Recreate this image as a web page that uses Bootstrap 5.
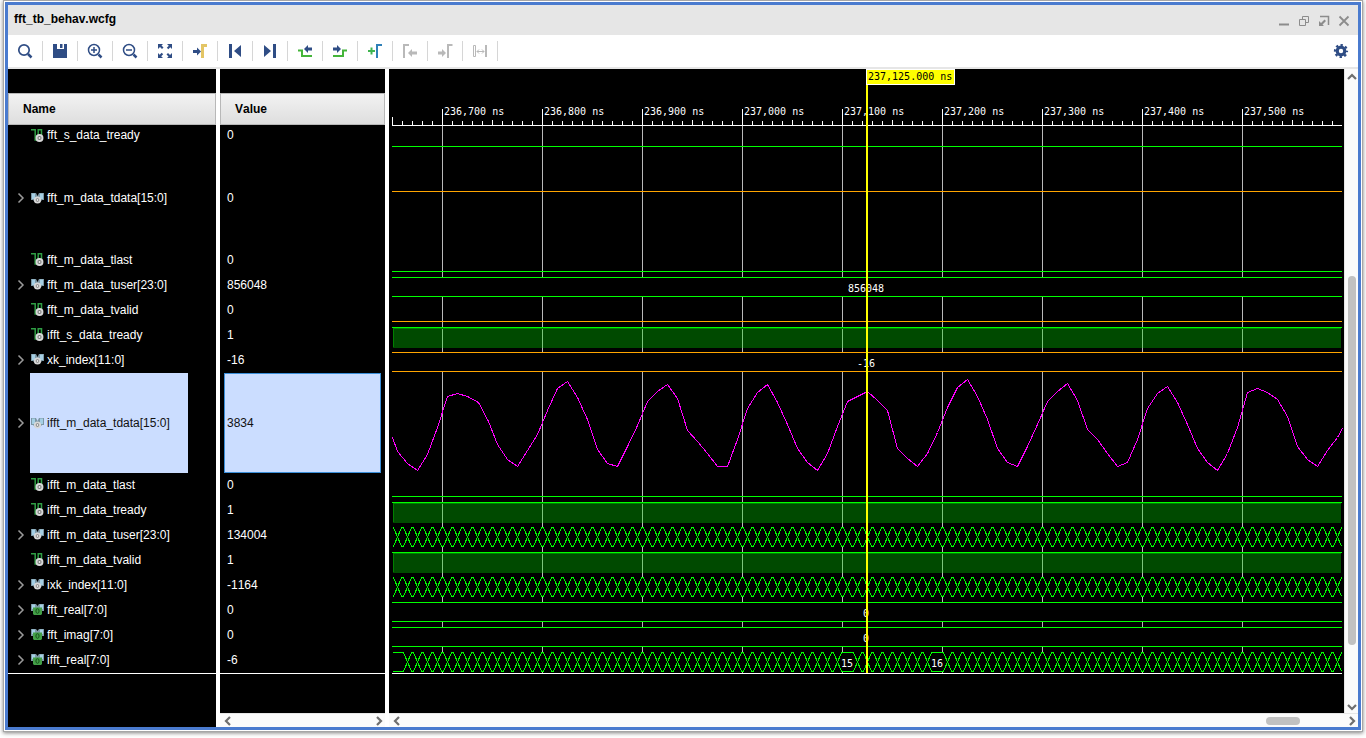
<!DOCTYPE html>
<html lang="en">
<head>
<meta charset="utf-8">
<meta name="viewport" content="width=device-width, initial-scale=1">
<title>fft_tb_behav.wcfg</title>
<link rel="stylesheet" href="https://cdn.jsdelivr.net/npm/bootstrap@5.3.0/dist/css/bootstrap.min.css">
<style>
  :root { --ink: #2f4d85; --frame: #4a7bcf; --chrome: #e6e6e6; --dim: #b9b9b9; }
  body { font: 12px/16px "Liberation Sans", Arial, sans-serif; font-kerning: none; color: #000; background: #fff; }
  .page { padding: 0 3px 6px; }
  .frame { border: 1px solid #a6a6a6; padding: 1px; background: #fff; box-shadow: 0 1px 4px rgba(0,0,0,.5); }
  .frame-inner { border: 3px solid var(--frame); }
  button { border: 0; background: none; padding: 0; line-height: 1; color: inherit; }
  svg { display: block; }
  .titlebar { height: 30px; background: var(--chrome); padding: 0 4px 2px 6px; }
  .titlebar h1 { font-size: 12px; line-height: 16px; }
  .titlebar button { width: 20px; height: 12px; color: #8c8c8c; }
  .toolbar { height: 34px; border-bottom: 2px solid var(--chrome); padding-right: 9px; color: var(--ink); }
  .tool { width: 35px; height: 20px; border-right: 1px solid #d6d6d6; }
  .tool:disabled { color: var(--dim); }
  .signals { width: 381px; border-right: 4px solid #fff; color: #fff;
    background: linear-gradient(to right, #000 208px, #fff 208px, #fff 212px, #000 212px); }
  .signals table { width: 377px; table-layout: fixed; border-collapse: separate; border-spacing: 0; border-bottom: 1px solid #fff; margin-top: 24px; }
  .signals th { height: 32px; padding: 0 14px; color: #000; background: linear-gradient(#f2f2f2, #dedede); border: 1px solid #b8b8b8; }
  .signals .gap { width: 4px; padding: 0; border: 0; background: #fff; }
  .signals td { height: 25px; padding: 0; }
  .signals tr.tall td { height: 100px; }
  .signals tr.first td { height: 23px; padding-bottom: 3px; }
  .sig, .val { height: 25px; padding-bottom: 2px; }
  .first .sig, .first .val { height: 20px; padding-bottom: 0; }
  .tall .sig, .tall .val { height: 100px; padding-bottom: 0; }
  .twist { width: 22px; height: 16px; padding-left: 7px; color: #9a9a9a; }
  .sig-label { height: 100%; padding: 0 15px 0 1px; gap: 3px; }
  .val { padding-left: 3px; margin: 0 4px; }
  .tall .val { border: 1px solid transparent; padding-left: 2px; }
  .chosen .sig-label { min-width: 158px; }
  .chosen .sig-label, .chosen .val { background: #cbddff; color: #111; }
  .chosen .val { border-color: #3b8fd9; }
  .hbar { height: 14px; background: #fbfbfb; border-top: 1px solid var(--chrome); color: #6e6e6e; padding-left: 2px; }
  .vbar { width: 14px; background: #fbfbfb; border-left: 1px solid var(--chrome); color: #6e6e6e; padding-top: 2px; }
  .thumb { background: #c1c1c1; border-radius: 4px; }
  .vbar .thumb { width: 8px; height: 369px; margin: auto 0 56px; }
  .hbar .thumb { width: 34px; height: 8px; margin: 0 46px 0 auto; }
  .name-foot { width: 212px; }
  .wave text { font: 10px "DejaVu Sans Mono", monospace; fill: #fff; }
  .wave { background: #000; }
</style>
</head>
<body>
<svg width="0" height="0" class="position-absolute" aria-hidden="true">
  <defs>
    <symbol id="scalar" viewBox="0 0 13 13">
      <path d="M0 .8h4.200v10.200h3V.8h3.300V6" fill="none" stroke="#2f9e44" stroke-width="1.500"/>
      <circle cx="8.500" cy="9" r="3" fill="#777" stroke="#d8d8d8" stroke-width="1.900"/><circle cx="8.500" cy="9" r="1" fill="#eee"/>
    </symbol>
    <symbol id="bus" viewBox="0 0 13 13">
      <path d="M0 1h5l1.500 3L8 1h5v7h-2l-2 2H4L2 8H0z" fill="#7d98a6"/><path d="M1 1.500h3V7H1zM9 1.500h3V7H9z" fill="#a5cfe4"/>
      <circle cx="6.500" cy="8" r="2.700" fill="#777" stroke="#d8d8d8" stroke-width="1.800"/><circle cx="6.500" cy="8" r="1" fill="#eee"/>
    </symbol>
    <symbol id="reg" viewBox="0 0 13 13">
      <path d="M0 1h5l1.500 2L8 1h5v7H0z" fill="#7d98a6"/><path d="M1 1.500h3V6H1zM9 1.500h3V6H9z" fill="#a5cfe4"/>
      <path d="M2 4.500h9V11l-1 1H3l-1-1z" fill="#43a047"/><ellipse cx="6.500" cy="8" rx="1.600" ry="2.300" fill="none" stroke="#174f1b"/>
    </symbol>
    <symbol id="right" viewBox="0 0 12 12"><path d="M3.500 1.500L8 6l-4.500 4.500" fill="none" stroke="currentColor" stroke-width="1.500"/></symbol>
    <symbol id="chev" viewBox="0 0 12 12"><path d="M8 2L4 6l4 4" fill="none" stroke="currentColor" stroke-width="2.200"/></symbol>
  </defs>
</svg>

<div class="page vh-100">
 <div class="frame h-100">
  <div class="frame-inner h-100 d-flex flex-column">

   <header class="titlebar d-flex align-items-center flex-shrink-0">
     <h1 class="fw-bold m-0 me-auto">fft_tb_behav.wcfg</h1>
     <div class="d-flex mt-1">
     <button type="button" aria-label="Minimize"><svg class="m-auto" width="12" height="12"><path d="M1 9.500h10" stroke="currentColor" stroke-width="2"/></svg></button>
     <button type="button" aria-label="Restore"><svg class="m-auto" width="12" height="12" fill="none" stroke="currentColor"><path d="M1.500 4.500h6v6h-6zM4.500 4.500v-3h6v6h-3"/></svg></button>
     <button type="button" aria-label="Float"><svg class="m-auto" width="12" height="12"><path d="M2 1.500h8.500V10" fill="none" stroke="currentColor" stroke-width="1.500"/><path d="M1 6v5h5L4.500 9.500l3.500-3.500-1.500-1.500L3 8z" fill="currentColor"/></svg></button>
     <button type="button" aria-label="Close"><svg class="m-auto" width="12" height="12"><path d="M1.500 1.500l9 9M10.500 1.500l-9 9" stroke="currentColor" stroke-width="1.800"/></svg></button>
     </div>
   </header>

   <div class="toolbar d-flex align-items-center flex-shrink-0" role="toolbar" aria-label="Waveform tools">
     <button class="tool" type="button" aria-label="Find"><svg class="m-auto" width="16" height="16" fill="none" stroke="currentColor"><circle cx="7" cy="7" r="5.200" stroke-width="1.700"/><path d="M11 11l3.500 3.500" stroke-width="2.500"/></svg></button>
     <button class="tool" type="button" aria-label="Save"><svg class="m-auto" width="16" height="16" fill="currentColor"><path d="M1 1h4v5h7V1h3v14H1z"/><path d="M8 1h2.500v4H8z"/></svg></button>
     <button class="tool" type="button" aria-label="Zoom in"><svg class="m-auto" width="16" height="16" fill="none" stroke="currentColor"><circle cx="7" cy="7" r="5.500" stroke-width="1.500"/><path d="M11.500 11.500l3 3" stroke-width="2.500"/><path d="M4 7h6M7 4v6" stroke-width="1.500"/></svg></button>
     <button class="tool" type="button" aria-label="Zoom out"><svg class="m-auto" width="16" height="16" fill="none" stroke="currentColor"><circle cx="7" cy="7" r="5.500" stroke-width="1.500"/><path d="M11.500 11.500l3 3" stroke-width="2.500"/><path d="M4 7h6" stroke-width="1.500"/></svg></button>
     <button class="tool" type="button" aria-label="Zoom fit"><svg class="m-auto" width="16" height="16" fill="currentColor"><path d="M1 1h5L4.500 2.500l2 2-1.500 1.500-2-2L1 6zM15 1v5l-1.700-1.700-2 2-1.500-1.500 2-2L10 1zM1 15v-5l1.700 1.700 2-2 1.500 1.500-2 2L6 15zM15 15h-5l1.500-1.500-2-2 1.500-1.500 2 2L15 10z"/></svg></button>
     <button class="tool" type="button" aria-label="Go to cursor"><svg class="m-auto" width="16" height="16"><path d="M9 8.500l-4-4V7H1v3h4v2.500z" fill="currentColor"/><path d="M10.500 15V2.500H15" fill="none" stroke="#e3c565" stroke-width="3"/></svg></button>
     <button class="tool" type="button" aria-label="Go to start"><svg class="m-auto" width="16" height="16" fill="currentColor"><path d="M2 1h3v14H2zM14 2v12L7 8z"/></svg></button>
     <button class="tool" type="button" aria-label="Go to end"><svg class="m-auto" width="16" height="16" fill="currentColor"><path d="M11 1h3v14h-3zM2 2v12l7-6z"/></svg></button>
     <button class="tool" type="button" aria-label="Previous transition"><svg class="m-auto" width="16" height="16"><path d="M1 7.500h4v5.500H15" fill="none" stroke="#45b53a" stroke-width="2"/><path d="M7 6l4-4v2.500h4v3h-4V10z" fill="currentColor"/></svg></button>
     <button class="tool" type="button" aria-label="Next transition"><svg class="m-auto" width="16" height="16"><path d="M1 13h10V7.500h4" fill="none" stroke="#45b53a" stroke-width="2"/><path d="M9 6L5 2v2.500H1v3h4V10z" fill="currentColor"/></svg></button>
     <button class="tool" type="button" aria-label="Add marker"><svg class="m-auto" width="16" height="16" fill="none" stroke-width="2"><path d="M1 8h7M4.500 4.500v7" stroke="#3fb54f"/><path d="M10 15V2h5" stroke="#2f80b8"/></svg></button>
     <button class="tool" type="button" aria-label="Previous marker" disabled><svg class="m-auto" width="16" height="16"><path d="M2 15V2h5" fill="none" stroke="currentColor" stroke-width="2"/><path d="M6 10l4-4v2.500h5v3h-5V14z" fill="currentColor"/></svg></button>
     <button class="tool" type="button" aria-label="Next marker" disabled><svg class="m-auto" width="16" height="16"><path d="M11 15V2h4.500" fill="none" stroke="currentColor" stroke-width="2"/><path d="M9 10L5 6v2.500H1v3h4V14z" fill="currentColor"/></svg></button>
     <button class="tool" type="button" aria-label="Swap cursors" disabled><svg class="m-auto" width="16" height="16" fill="none" stroke="currentColor"><path d="M1.500 2.500h2v11h-2zM5 8.500h7M7 6.500l-2 2 2 2M10 6.500l2 2-2 2"/><path d="M14 2v12" stroke-width="2"/></svg></button>
     <button class="ms-auto" type="button" aria-label="Settings"><svg width="16" height="16" fill="none" stroke="currentColor"><circle cx="8" cy="8" r="3.800" stroke-width="3.200"/><circle cx="8" cy="8" r="6" stroke-width="2.200" stroke-dasharray="2.356 2.356" stroke-dashoffset="1.178"/></svg></button>
   </div>

   <main class="d-flex flex-fill overflow-hidden">
     <section class="signals d-flex flex-column flex-shrink-0">
       <table>
         <colgroup><col style="width:208px"><col style="width:4px"><col></colgroup>
         <thead><tr><th scope="col">Name</th><th class="gap" aria-hidden="true"></th><th scope="col">Value</th></tr></thead>
         <tbody id="rows"></tbody>
       </table>
       <div class="d-flex mt-auto">
         <div class="name-foot"></div>
         <div class="hbar flex-fill d-flex align-items-center justify-content-between">
           <button type="button" aria-label="Scroll values left"><svg width="12" height="12"><use href="#chev"/></svg></button>
           <button type="button" aria-label="Scroll values right"><svg width="12" height="12" transform="rotate(180)"><use href="#chev"/></svg></button>
         </div>
       </div>
     </section>

     <section class="d-flex flex-column flex-fill overflow-hidden">
       <div class="d-flex flex-fill overflow-hidden">
         <div class="wave flex-fill overflow-hidden" id="wave"></div>
         <div class="vbar d-flex flex-column align-items-center flex-shrink-0">
           <button type="button" aria-label="Scroll up"><svg width="12" height="12" transform="rotate(90)"><use href="#chev"/></svg></button>
           <div class="thumb"></div>
           <button type="button" aria-label="Scroll down"><svg width="12" height="12" transform="rotate(270)"><use href="#chev"/></svg></button>
         </div>
       </div>
       <div class="hbar d-flex align-items-center flex-shrink-0">
         <button type="button" aria-label="Scroll left"><svg width="12" height="12"><use href="#chev"/></svg></button>
         <div class="thumb"></div>
         <button type="button" aria-label="Scroll right"><svg width="12" height="12" transform="rotate(180)"><use href="#chev"/></svg></button>
       </div>
     </section>
   </main>
  </div>
 </div>
</div>

<script>
// [name, value, icon, row class]
const signals = [
  ["fft_s_data_tready", "0", "scalar", "first"],
  ["fft_m_data_tdata[15:0]", "0", "bus", "tall"],
  ["fft_m_data_tlast", "0", "scalar", ""],
  ["fft_m_data_tuser[23:0]", "856048", "bus", ""],
  ["fft_m_data_tvalid", "0", "scalar", ""],
  ["ifft_s_data_tready", "1", "scalar", ""],
  ["xk_index[11:0]", "-16", "bus", ""],
  ["ifft_m_data_tdata[15:0]", "3834", "bus", "tall chosen"],
  ["ifft_m_data_tlast", "0", "scalar", ""],
  ["ifft_m_data_tready", "1", "scalar", ""],
  ["ifft_m_data_tuser[23:0]", "134004", "bus", ""],
  ["ifft_m_data_tvalid", "1", "scalar", ""],
  ["ixk_index[11:0]", "-1164", "bus", ""],
  ["fft_real[7:0]", "0", "reg", ""],
  ["fft_imag[7:0]", "0", "reg", ""],
  ["ifft_real[7:0]", "-6", "reg", ""]
];
document.getElementById("rows").innerHTML = signals.map(([name, value, icon, cls]) => {
  const twist = icon === "scalar" ? '<span class="twist"></span>'
    : `<button class="twist" type="button" aria-label="Expand ${name}"><svg width="12" height="12"><use href="#right"/></svg></button>`;
  return `<tr class="${cls}"><td><div class="sig d-flex align-items-center">${twist}<span class="sig-label d-flex align-items-center"><svg width="13" height="13"><use href="#${icon}"/></svg>${name}</span></div></td><td class="gap"></td><td><div class="val d-flex align-items-center">${value}</div></td></tr>`;
}).join("");

// Samples of ifft_m_data_tdata as x, y inside the wave area
const analog = [[3,368],[8,382],[18,394],[28,401],[38,385],[48,358],[58,327],[68,324],[78,327],[89,333],[99,352],[108,375],[118,390],[128,397],[138,381],[148,365],[158,341],[168,319],[178,312],[188,328],[198,350],[208,380],[218,394],[228,397],[238,377],[248,356],[258,332],[268,322],[278,315],[288,329],[298,361],[308,372],[318,384],[328,397],[338,397],[348,370],[358,339],[368,323],[378,315],[388,333],[398,355],[408,379],[418,393],[428,401],[438,384],[448,357],[458,332],[468,327],[478,322],[488,331],[498,341],[508,379],[518,389],[528,397],[538,384],[548,363],[558,338],[568,318],[578,310],[588,327],[598,350],[608,379],[618,393],[628,397],[638,377],[648,355],[658,332],[668,322],[678,314],[688,331],[698,360],[708,370],[718,384],[728,397],[738,393],[748,370],[758,339],[768,324],[778,317],[788,333],[798,355],[808,379],[818,393],[828,401],[838,384],[848,358],[858,323],[868,319],[878,323],[888,330],[898,347],[908,377],[918,390],[928,397],[938,381],[948,368],[953,359]];

function draw() {
  const host = document.getElementById("wave");
  const w = host.clientWidth, x0 = 3, x1 = w - 2, G = "#0f0", O = "#ffa500";
  let s = "";
  const box = (x, y, bw, bh, c) => s += `<rect x="${x}" y="${y}" width="${bw}" height="${bh}" fill="${c}"/>`;
  const row = (y, c) => box(x0, y, x1 - x0, 1, c);
  const label = (x, y, t, extra = "") => s += `<text x="${x}" y="${y}" ${extra}>${t}</text>`;
  row(56, "#fff");
  for (let x = x0, i = 0; x < x1; x += 10, i++) {
    const k = (i + 5) % 10;
    if (k === 0) {
      box(x, 40, 1, 16, "#fff"); box(x, 57, 1, 548, "#b9b9b9");
      label(x + 2, 46, `${(236600 + (i + 5) * 10).toLocaleString("en-US")} ns`);
    } else {
      const top = i === 0 ? 48 : k === 5 ? 51 : 52;
      box(x, top, 1, 56 - top, "#fff");
    }
  }
  // single-bit rows
  row(77, G); row(122, O); row(202, G); row(252, O); row(427, G);
  [258, 433, 483].forEach(y => {
    box(x0 + 1, y + 1, x1 - x0 - 2, 20, "rgba(0,225,0,.33)");
    box(x0 + 1, y + 1, x1 - x0 - 2, 1, "#008000"); box(x0 + 1, y + 1, 1, 19, "#008000"); row(y, G);
  });
  // buses holding one value
  [[208, G, "856048"], [283, O, "-16"], [533, G, "0"], [558, G, "0"]].forEach(([y, c, t]) => {
    box(x0, y, x1 - x0, 20, "#000"); row(y, c); row(y + 19, c); label(477, y + 15, t, 'text-anchor="middle"');
  });
  // buses changing on every clock
  [[458, []], [508, []], [583, [8, 458, 548]]].forEach(([y, held]) => {
    box(x0, y, x1 - x0, 20, "#000");
    let a = `M${x0} ${y}`, b = `M${x0} ${y + 19}`, up = true;
    for (let c = 8; c - 5 < x1; c += 10) {
      if (held.includes(c)) continue;
      const p = up ? [y, y + 19] : [y + 19, y];
      a += `L${c - 4} ${p[0]}L${c + 4} ${p[1]}`; b += `L${c - 4} ${p[1]}L${c + 4} ${p[0]}`; up = !up;
    }
    s += `<svg width="${x1}" height="605"><path transform="translate(.5 .5)" d="${a}${b}" fill="none" stroke="${G}" shape-rendering="crispEdges"/></svg>`;
  });
  label(458, 598, "15", 'text-anchor="middle"'); label(548, 598, "16", 'text-anchor="middle"');
  s += `<polyline points="${analog.join(" ")}" transform="translate(.5 .5)" fill="none" stroke="#f0f" shape-rendering="crispEdges"/>`;
  row(604, "#fff");
  // main cursor
  box(477, 0, 2, 604, "#ff0"); box(477, 0, 89, 16, "#fff"); box(478, 1, 87, 14, "#ff0");
  label(479, 11, "237,125.000 ns", 'style="fill:#000"');
  host.innerHTML = `<svg width="${w}" height="605">${s}</svg>`;
}
draw();
addEventListener("resize", draw);
</script>
<script src="https://cdn.jsdelivr.net/npm/bootstrap@5.3.0/dist/js/bootstrap.bundle.min.js"></script>
</body>
</html>
